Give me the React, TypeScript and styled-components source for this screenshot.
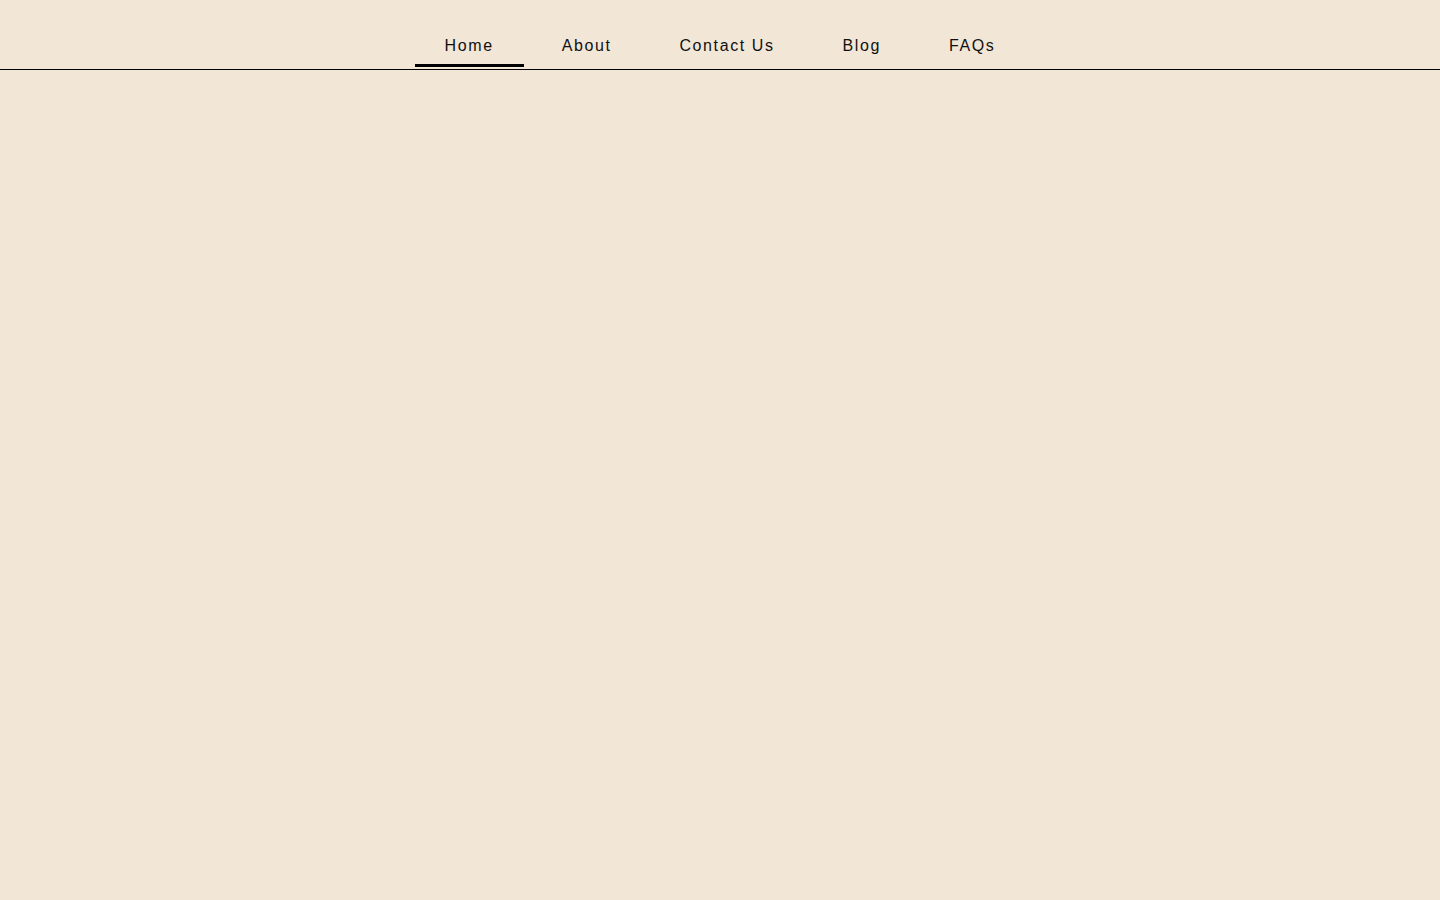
import styled, { createGlobalStyle } from "styled-components";

const GlobalStyle = createGlobalStyle`
  html, body {
    margin: 0;
    padding: 0;
    background: #f2e6d7;
  }
  body {
    font-family: "Liberation Sans", Arial, sans-serif;
    min-height: 100vh;
  }
`;

const Page = styled.div`
  min-height: 100vh;
  background: #f2e6d7;
`;

const Header = styled.header`
  height: 69px;
  border-bottom: 1px solid #000;
  display: flex;
  justify-content: center;
  align-items: flex-end;
`;

const Nav = styled.nav`
  display: flex;
  gap: 8px;
  padding-bottom: 2px;
`;

const Tab = styled.a<{ $active?: boolean }>`
  display: block;
  padding: 14px 30px 0;
  height: 45px;
  line-height: 19px;
  font-size: 16px;
  letter-spacing: 1.6px;
  color: #111;
  text-decoration: none;
  box-sizing: border-box;
  border-bottom: 3px solid ${(p) => (p.$active ? "#000" : "transparent")};
  cursor: pointer;
`;

const links = ["Home", "About", "Contact Us", "Blog", "FAQs"];

const App = () => {
  return (
    <Page>
      <GlobalStyle />
      <Header>
        <Nav>
          {links.map((l) => (
            <Tab key={l} $active={l === "Home"}>
              {l}
            </Tab>
          ))}
        </Nav>
      </Header>
    </Page>
  );
};

export default App;
